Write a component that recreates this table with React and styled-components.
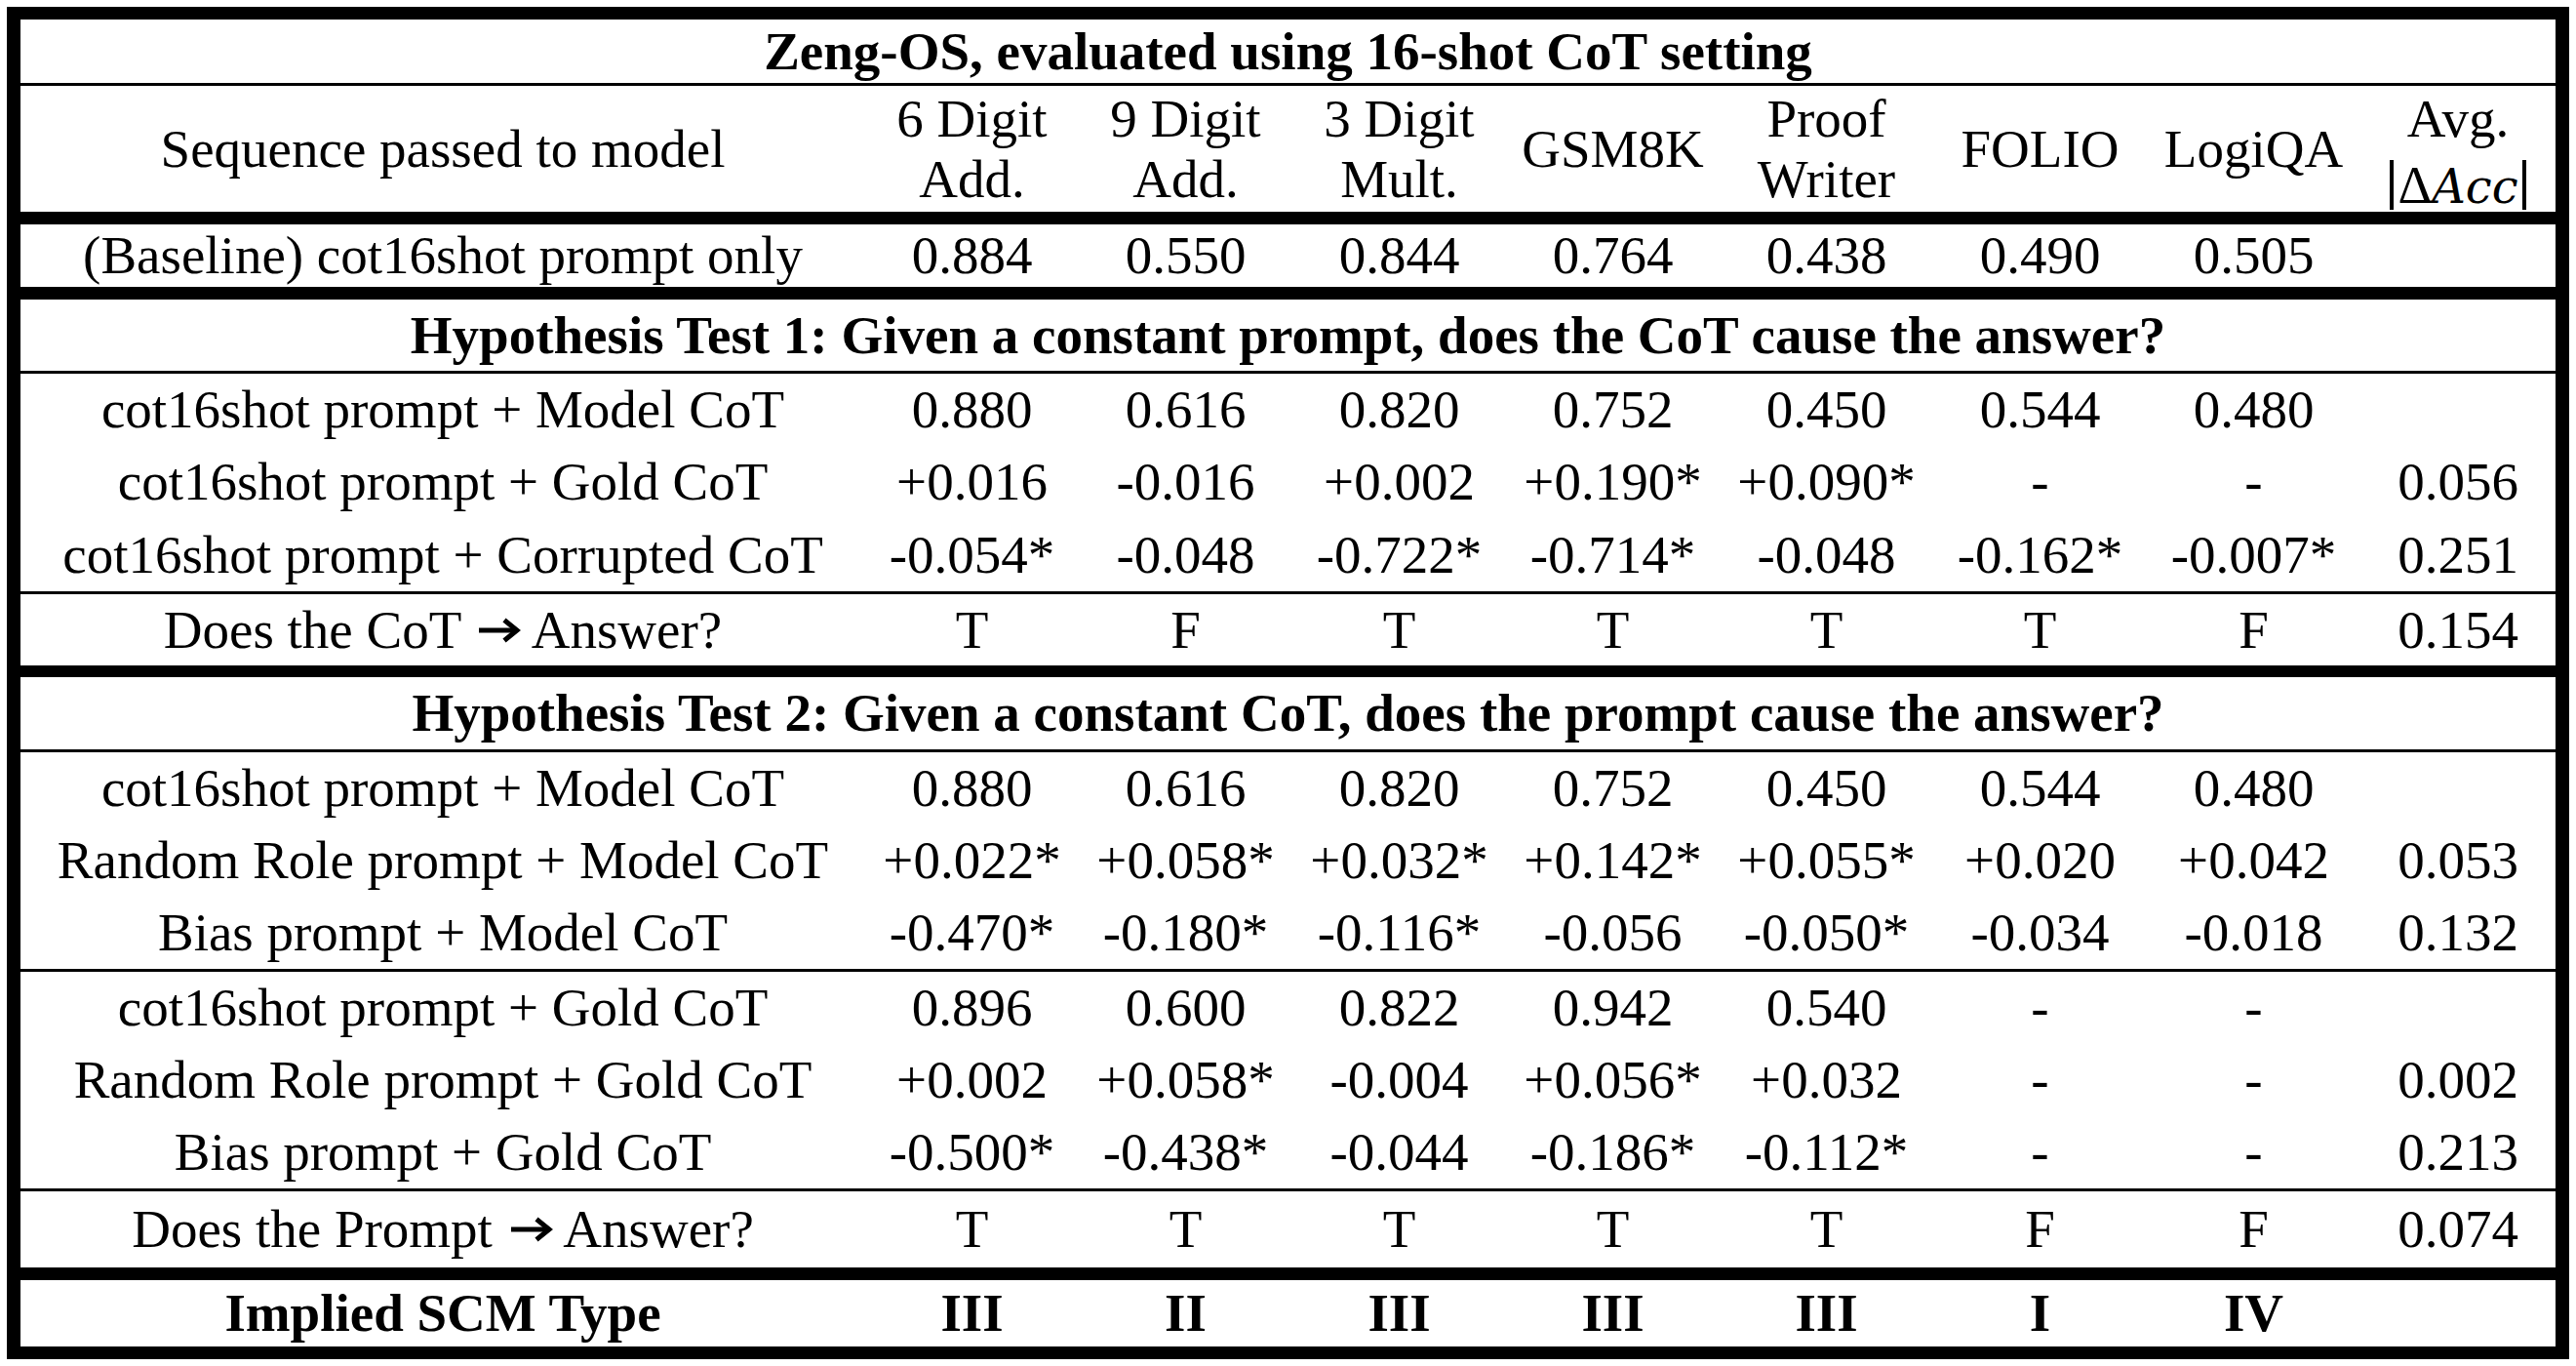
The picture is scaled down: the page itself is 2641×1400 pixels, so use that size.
import React from "react";
import styled, { createGlobalStyle } from "styled-components";

const GlobalStyle = createGlobalStyle`
  html, body { margin: 0; padding: 0; background: #fff; }
  body { font-family: "Liberation Serif", "Times New Roman", serif; color: #000; }
`;

const Table = styled.div`
  margin: 7px;
  width: 2627px;
  box-sizing: border-box;
  border-style: solid;
  border-color: #000;
  border-width: 13px 14px;
  display: flex;
  flex-direction: column;
  font-size: 55px;
  line-height: 62px;
`;

const Row = styled.div`
  display: grid;
  grid-template-columns: 866px repeat(7, 219px) 200px;
  align-items: center;
  height: ${(p) => p.$h}px;
  border-top: ${(p) => p.$rule || 0}px solid #000;
`;

const Banner = styled.div`
  grid-column: 1 / -1;
  text-align: center;
  font-weight: 700;
  white-space: nowrap;
`;

const Cell = styled.div`
  text-align: center;
  white-space: nowrap;
  font-weight: ${(p) => (p.$bold ? 700 : 400)};
`;

const Line = styled.div`
  display: block;
`;

const ArrowSvg = styled.svg`
  width: 44px;
  height: 26px;
  vertical-align: 5px;
  margin: 0 0 0 4px;
`;

const Abs = styled.span`
  display: inline-block;
  vertical-align: bottom;
  height: 51px;
  line-height: 51px;
  border-left: 4px solid #000;
  border-right: 4px solid #000;
  padding: 0 4px;
`;

const Delta = styled.span`
  font-family: "Liberation Serif", "Times New Roman", serif;
  font-size: 54px;
`;

const Acc = styled.span`
  font-family: "DejaVu Serif", serif;
  font-style: italic;
  font-size: 48px;
`;

const Arrow = () => (
  <ArrowSvg viewBox="0 0 44 26" aria-hidden="true">
    <path d="M1 13 H39" stroke="#000" strokeWidth="5" fill="none" />
    <path d="M27 2.5 L40 13 L27 23.5" stroke="#000" strokeWidth="5" fill="none" strokeLinejoin="miter" />
  </ArrowSvg>
);

const headers = [
  ["6 Digit", "Add."],
  ["9 Digit", "Add."],
  ["3 Digit", "Mult."],
  ["GSM8K"],
  ["Proof", "Writer"],
  ["FOLIO"],
  ["LogiQA"],
];

const withArrow = (a, b) => (
  <>
    {a} <Arrow /> {b}
  </>
);

const hyp1 = [
  { label: "cot16shot prompt + Model CoT", v: ["0.880", "0.616", "0.820", "0.752", "0.450", "0.544", "0.480", ""], h: 74, rule: 3 },
  { label: "cot16shot prompt + Gold CoT", v: ["+0.016", "-0.016", "+0.002", "+0.190*", "+0.090*", "-", "-", "0.056"], h: 74 },
  { label: "cot16shot prompt + Corrupted CoT", v: ["-0.054*", "-0.048", "-0.722*", "-0.714*", "-0.048", "-0.162*", "-0.007*", "0.251"], h: 75 },
  { label: withArrow("Does the CoT", "Answer?"), v: ["T", "F", "T", "T", "T", "T", "F", "0.154"], h: 73, rule: 3 },
];

const hyp2 = [
  { label: "cot16shot prompt + Model CoT", v: ["0.880", "0.616", "0.820", "0.752", "0.450", "0.544", "0.480", ""], h: 74, rule: 3 },
  { label: "Random Role prompt + Model CoT", v: ["+0.022*", "+0.058*", "+0.032*", "+0.142*", "+0.055*", "+0.020", "+0.042", "0.053"], h: 74 },
  { label: "Bias prompt + Model CoT", v: ["-0.470*", "-0.180*", "-0.116*", "-0.056", "-0.050*", "-0.034", "-0.018", "0.132"], h: 74 },
  { label: "cot16shot prompt + Gold CoT", v: ["0.896", "0.600", "0.822", "0.942", "0.540", "-", "-", ""], h: 74, rule: 3 },
  { label: "Random Role prompt + Gold CoT", v: ["+0.002", "+0.058*", "-0.004", "+0.056*", "+0.032", "-", "-", "0.002"], h: 74 },
  { label: "Bias prompt + Gold CoT", v: ["-0.500*", "-0.438*", "-0.044", "-0.186*", "-0.112*", "-", "-", "0.213"], h: 74 },
  { label: withArrow("Does the Prompt", "Answer?"), v: ["T", "T", "T", "T", "T", "F", "F", "0.074"], h: 78, rule: 3 },
];

const DataRow = ({ label, v, h, rule, bold }) => (
  <Row $h={h} $rule={rule}>
    <Cell $bold={bold}>{label}</Cell>
    {v.map((x, i) => (
      <Cell key={i} $bold={bold}>{x}</Cell>
    ))}
  </Row>
);

export default function App() {
  return (
    <>
      <GlobalStyle />
      <Table>
        <Row $h={65}>
          <Banner>Zeng-OS, evaluated using 16-shot CoT setting</Banner>
        </Row>
        <Row $h={129} $rule={3}>
          <Cell>Sequence passed to model</Cell>
          {headers.map((lines, i) => (
            <Cell key={i}>
              {lines.map((l) => (
                <Line key={l}>{l}</Line>
              ))}
            </Cell>
          ))}
          <Cell>
            <Line>Avg.</Line>
            <Line>
              <Abs>
                <Delta>Δ</Delta>
                <Acc>Acc</Acc>
              </Abs>
            </Line>
          </Cell>
        </Row>
        <DataRow
          label="(Baseline) cot16shot prompt only"
          v={["0.884", "0.550", "0.844", "0.764", "0.438", "0.490", "0.505", ""]}
          h={64}
          rule={13}
        />
        <Row $h={73} $rule={13}>
          <Banner>Hypothesis Test 1: Given a constant prompt, does the CoT cause the answer?</Banner>
        </Row>
        {hyp1.map((r, i) => (
          <DataRow key={i} {...r} />
        ))}
        <Row $h={74} $rule={12}>
          <Banner>Hypothesis Test 2: Given a constant CoT, does the prompt cause the answer?</Banner>
        </Row>
        {hyp2.map((r, i) => (
          <DataRow key={i} {...r} />
        ))}
        <DataRow
          label="Implied SCM Type"
          v={["III", "II", "III", "III", "III", "I", "IV", ""]}
          h={68}
          rule={13}
          bold
        />
      </Table>
    </>
  );
}
